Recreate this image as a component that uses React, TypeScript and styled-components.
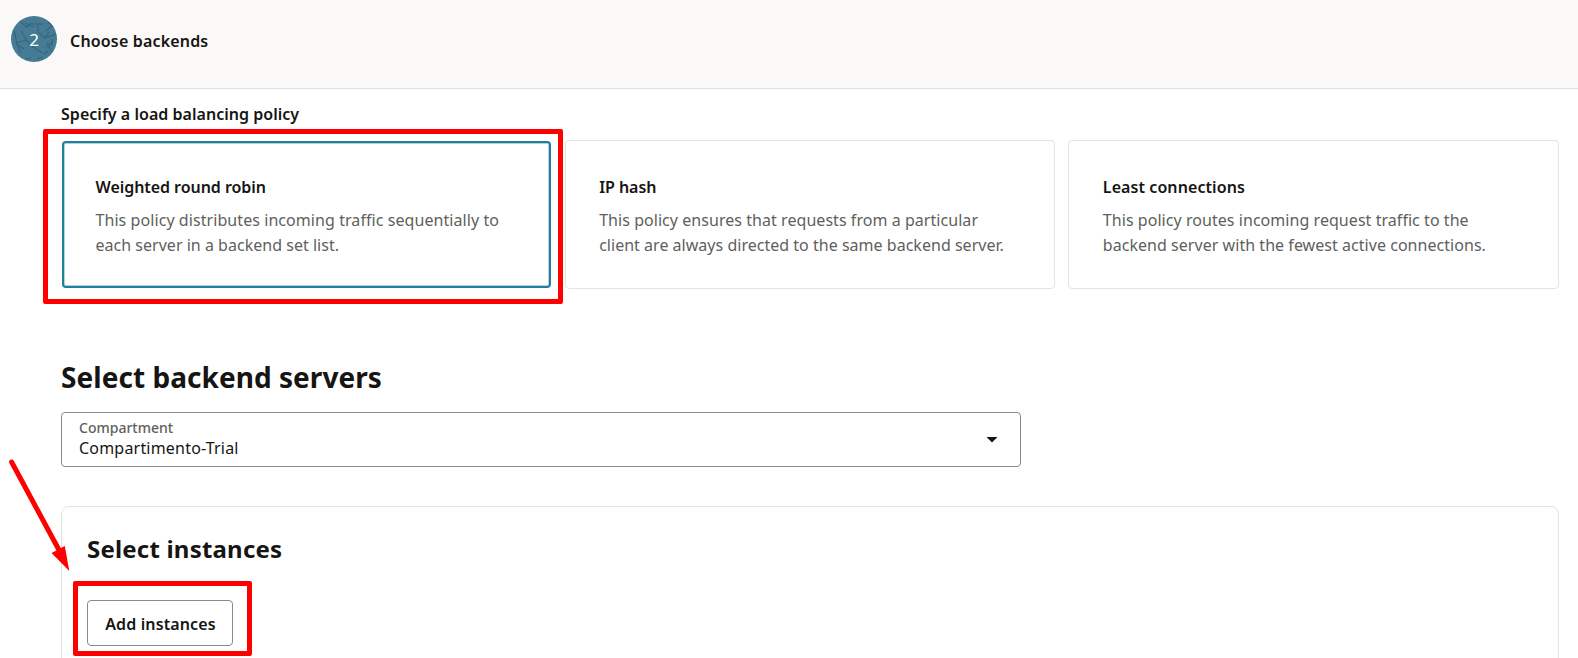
import React from 'react';
import styled, { createGlobalStyle } from 'styled-components';

const GlobalStyle = createGlobalStyle`
  *, *::before, *::after { box-sizing: border-box; }
  body {
    margin: 0;
    background: #fff;
    color: #161513;
    font-family: "Noto Sans", "Open Sans", sans-serif;
    font-size: 16px;
  }
  h2, h3, p { margin: 0; }
`;

const Page = styled.div`
  position: relative;
  display: flex;
  flex-direction: column;
  height: 658px;
  overflow: hidden;
`;

const StepHeader = styled.header`
  display: flex;
  align-items: center;
  flex: none;
  gap: 13px;
  height: 89px;
  padding: 0 11px 10px;
  background: #faf9f8;
  border-bottom: 1px solid #e0dfde;
`;

const StepBadge = styled.div`
  display: grid;
  place-items: center;
  width: 46px;
  height: 46px;
  > * { grid-area: 1 / 1; }
`;

const StepNumber = styled.span`
  padding-top: 1px;
  color: #fff;
  font-size: 17px;
  line-height: 24px;
`;

const StepTitle = styled.div`
  padding-top: 4px;
  font-weight: 600;
  line-height: 24px;
  letter-spacing: 0.17px;
`;

const Content = styled.main`
  display: flex;
  flex-direction: column;
  flex: none;
  padding: 13px 19px 0 61px;
`;

const PolicyLabel = styled.div`
  margin-bottom: 14px;
  font-weight: 600;
  line-height: 24px;
  letter-spacing: 0.03px;
`;

const PolicyGrid = styled.div`
  display: grid;
  grid-template-columns: repeat(3, 1fr);
  gap: 13px;
  height: 149px;
`;

const PolicyCard = styled.div<{ $selected?: boolean }>`
  margin: ${(p) => (p.$selected ? '1px' : '0')};
  padding: ${(p) => (p.$selected ? '32px 31.5px 0' : '34px 33.5px 0')};
  border: ${(p) => (p.$selected ? '2px solid #227e9e' : '1px solid #e4e4e3')};
  border-radius: 4px;
  box-shadow: ${(p) => (p.$selected ? 'inset 0 0 0 1px #b5d1dc' : 'none')};
`;

const PolicyTitle = styled.div<{ $track: number }>`
  margin-bottom: 8px;
  font-weight: 600;
  line-height: 25px;
  letter-spacing: ${(p) => p.$track}px;
`;

const PolicyLine = styled.div<{ $track: number }>`
  color: #605f5d;
  line-height: 25px;
  white-space: nowrap;
  letter-spacing: ${(p) => p.$track}px;
`;

const SectionTitle = styled.h2`
  margin-top: 68px;
  font-size: 28px;
  font-weight: 700;
  line-height: 40px;
  letter-spacing: 0.05px;
`;

const SelectField = styled.div`
  display: flex;
  align-items: center;
  justify-content: space-between;
  width: 960px;
  height: 55px;
  margin-top: 15px;
  padding: 0 22px 0 17px;
  border: 1px solid #8b8a88;
  border-radius: 4px;
`;

const FieldText = styled.div`
  display: flex;
  flex-direction: column;
`;

const FieldLabel = styled.span`
  padding-bottom: 1px;
  color: #605f5d;
  font-size: 14px;
  font-weight: 500;
  line-height: 16px;
`;

const FieldValue = styled.span`
  line-height: 22px;
  letter-spacing: 0.2px;
`;

const InstancesPanel = styled.section`
  height: 190px;
  margin-top: 39px;
  padding: 25px;
  border: 1px solid #e4e4e3;
  border-radius: 8px;
`;

const PanelTitle = styled.h3`
  font-size: 24px;
  font-weight: 700;
  line-height: 34px;
  letter-spacing: 0.2px;
`;

const AddButton = styled.button`
  width: 146px;
  height: 46px;
  margin-top: 34px;
  padding: 1px 0 0 1px;
  border: 1px solid #8b8a88;
  border-radius: 4px;
  background: #fff;
  color: #161513;
  font: 600 16px "Noto Sans", "Open Sans", sans-serif;
  letter-spacing: 0.12px;
`;

const Highlight = styled.div<{ $x: number; $y: number; $w: number; $h: number }>`
  position: absolute;
  left: ${(p) => p.$x}px;
  top: ${(p) => p.$y}px;
  width: ${(p) => p.$w}px;
  height: ${(p) => p.$h}px;
  border: 5px solid #f00;
  border-radius: 2px;
`;

const Arrow = styled.svg`
  position: absolute;
  left: 0;
  top: 450px;
`;

type Line = { text: string; track: number };
type Policy = { title: Line; lines: Line[]; selected?: boolean };

const policies: Policy[] = [
  {
    title: { text: 'Weighted round robin', track: -0.05 },
    lines: [
      { text: 'This policy distributes incoming traffic sequentially to', track: 0.07 },
      { text: 'each server in a backend set list.', track: 0.02 },
    ],
    selected: true,
  },
  {
    title: { text: 'IP hash', track: -0.05 },
    lines: [
      { text: 'This policy ensures that requests from a particular', track: 0.05 },
      { text: 'client are always directed to the same backend server.', track: 0.02 },
    ],
  },
  {
    title: { text: 'Least connections', track: 0.08 },
    lines: [
      { text: 'This policy routes incoming request traffic to the', track: 0.05 },
      { text: 'backend server with the fewest active connections.', track: 0.04 },
    ],
  },
];

export default function App() {
  return (
    <Page>
      <GlobalStyle />
      <StepHeader>
        <StepBadge>
          <svg width="46" height="46" viewBox="0 0 46 46">
            <defs>
              <clipPath id="disc">
                <circle cx="23" cy="23" r="23" />
              </clipPath>
            </defs>
            <circle cx="23" cy="23" r="23" fill="#457b94" />
            <path
              clipPath="url(#disc)"
              d="M9 5l7 7M15 11l6-4M21 8h11M27 8v9M14 7l9 4M10 15l7 11M3 14l3 14 4 9M5 27l10-3M5 28l8 5M18 28l13 9M17 25l5 7M28 17l6 5 11-4M34 22l4-6M35 15l8-7M37 6l8 7M35 31l7-5M36 27l5 9M41 23v7M14 43l6-1M26 43l6-2M33 38l4-3"
              fill="none"
              stroke="#2f6077"
              strokeWidth="1.2"
              strokeOpacity="0.75"
            />
          </svg>
          <StepNumber>2</StepNumber>
        </StepBadge>
        <StepTitle>Choose backends</StepTitle>
      </StepHeader>

      <Content>
        <PolicyLabel>Specify a load balancing policy</PolicyLabel>
        <PolicyGrid>
          {policies.map((policy) => (
            <PolicyCard key={policy.title.text} $selected={policy.selected}>
              <PolicyTitle $track={policy.title.track}>{policy.title.text}</PolicyTitle>
              {policy.lines.map((line) => (
                <PolicyLine key={line.text} $track={line.track}>
                  {line.text}
                </PolicyLine>
              ))}
            </PolicyCard>
          ))}
        </PolicyGrid>

        <SectionTitle>Select backend servers</SectionTitle>
        <SelectField>
          <FieldText>
            <FieldLabel>Compartment</FieldLabel>
            <FieldValue>Compartimento-Trial</FieldValue>
          </FieldText>
          <svg width="12" height="6" viewBox="0 0 12 6">
            <path d="M0.5 0h11L6 5.6z" fill="#161513" />
          </svg>
        </SelectField>

        <InstancesPanel>
          <PanelTitle>Select instances</PanelTitle>
          <AddButton>Add instances</AddButton>
        </InstancesPanel>
      </Content>

      <Highlight $x={43} $y={129} $w={520} $h={175} />
      <Highlight $x={73} $y={581} $w={179} $h={75} />
      <Arrow width="80" height="130" viewBox="0 0 80 130">
        <path d="M11.6 12L59 100" stroke="#f00" strokeWidth="5" strokeLinecap="round" />
        <path d="M69.3 121L51.5 103L64.8 96z" fill="#f00" />
      </Arrow>
    </Page>
  );
}
